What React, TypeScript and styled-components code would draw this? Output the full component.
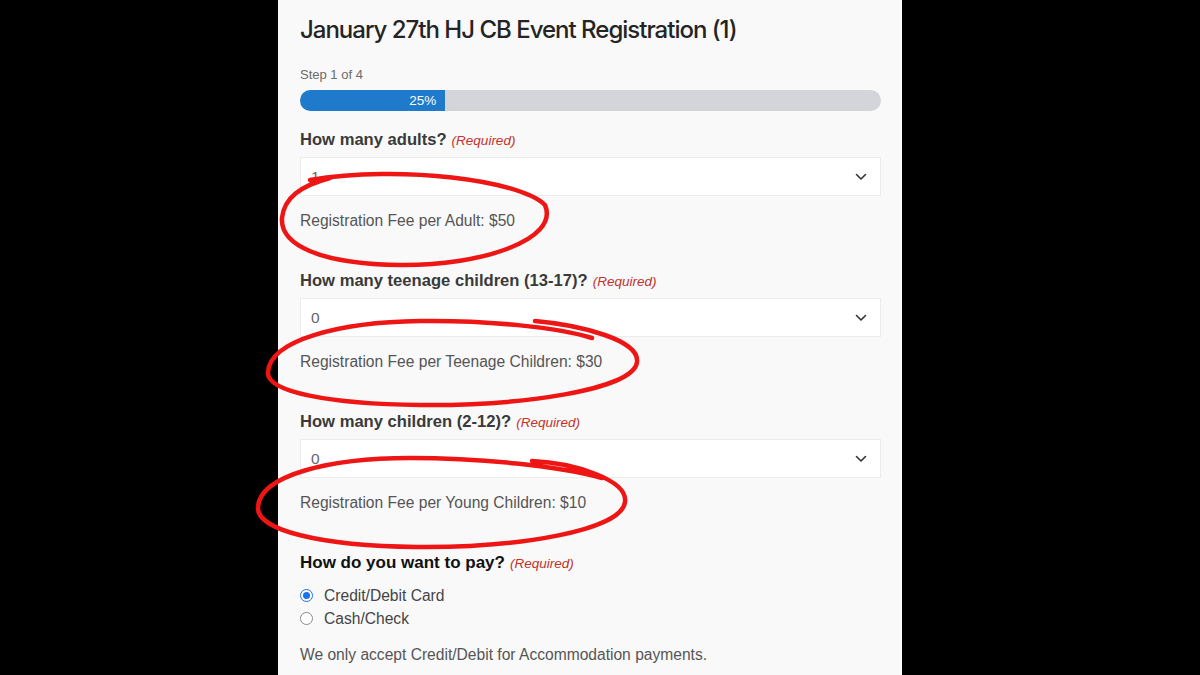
import React from "react";
import styled, { createGlobalStyle } from "styled-components";

const Global = createGlobalStyle`
  html, body { margin: 0; padding: 0; background: #000; }
  body { font-family: "Liberation Sans", Arial, sans-serif; }
`;

const Page = styled.div`
  position: relative;
  width: 1200px;
  height: 675px;
  background: #000;
  display: flex;
  justify-content: flex-start;
  overflow: hidden;
`;

const Panel = styled.div`
  margin-left: 278px;
  width: 581px;
  height: 661px;
  background: #f9f9f9;
  border-right: 2px solid #fdfdfd;
  padding: 14px 19px 0 22px;
  display: flex;
  flex-direction: column;
  box-sizing: content-box;
`;

const Title = styled.h1`
  margin: 0;
  font-family: Inter, "Noto Sans", sans-serif;
  font-weight: 500;
  font-size: 24px;
  line-height: 32px;
  letter-spacing: -1px;
  color: #242424;
`;

const StepText = styled.div`
  margin-top: 21px;
  font-size: 13px;
  line-height: 16px;
  color: #6b6b6b;
`;

const Track = styled.div`
  margin-top: 7px;
  height: 21px;
  border-radius: 11px;
  background: #d3d5da;
  overflow: hidden;
  display: flex;
`;

const Fill = styled.div`
  height: 100%;
  background: #1f7acb;
  color: #fff;
  font-size: 13.5px;
  display: flex;
  align-items: center;
  justify-content: flex-end;
  padding-right: 9px;
  box-sizing: border-box;
`;

const Field = styled.div<{ first?: boolean }>`
  margin-top: ${(p) => (p.first ? "19px" : "40px")};
  display: flex;
  flex-direction: column;
`;

const Label = styled.div<{ dark?: boolean }>`
  font-weight: 700;
  font-size: ${(p) => (p.dark ? "17px" : "16.6px")};
  line-height: 20px;
  color: ${(p) => (p.dark ? "#111" : "#3a3a3a")};
`;

const Required = styled.span`
  margin-left: 5px;
  font-weight: 400;
  font-style: italic;
  font-size: 13.5px;
  color: #c4312b;
`;

const SelectBox = styled.div`
  margin-top: 6px;
  height: 39px;
  background: #fff;
  border: 1px solid #ececec;
  box-sizing: border-box;
  display: flex;
  align-items: center;
  justify-content: space-between;
  padding: 0 13px 0 10px;
  font-size: 15.5px;
  color: #666;
`;

const Fee = styled.div`
  margin-top: 15px;
  font-size: 15.6px;
  line-height: 20px;
  color: #555;
`;

const RadioList = styled.div`
  margin-top: 10px;
  display: flex;
  flex-direction: column;
`;

const RadioRow = styled.label`
  height: 23px;
  display: flex;
  align-items: center;
  gap: 11px;
  font-size: 15.6px;
  color: #444;
`;

const RadioDot = styled.span<{ checked?: boolean }>`
  width: 13px;
  height: 13px;
  border-radius: 50%;
  box-sizing: border-box;
  border: 1px solid ${(p) => (p.checked ? "#1a73e8" : "#8a8a8a")};
  background: #fff;
  display: flex;
  align-items: center;
  justify-content: center;
  &::after {
    content: "";
    width: 7px;
    height: 7px;
    border-radius: 50%;
    background: ${(p) => (p.checked ? "#1a73e8" : "transparent")};
  }
`;

const Note = styled.div`
  margin-top: 15px;
  font-size: 15.6px;
  line-height: 20px;
  color: #555;
`;

const Overlay = styled.svg`
  position: absolute;
  left: 0;
  top: 0;
  pointer-events: none;
`;

const Chevron = () => (
  <svg width="12" height="8" viewBox="0 0 12 8">
    <path d="M1.5 1.5 L6 6 L10.5 1.5" fill="none" stroke="#333" strokeWidth="1.6" strokeLinecap="round" strokeLinejoin="round" />
  </svg>
);

const fields = [
  { q: "How many adults?", v: "1", fee: "Registration Fee per Adult: $50" },
  { q: "How many teenage children (13-17)?", v: "0", fee: "Registration Fee per Teenage Children: $30" },
  { q: "How many children (2-12)?", v: "0", fee: "Registration Fee per Young Children: $10" },
];

export default function App() {
  return (
    <Page>
      <Global />
      <Panel>
        <Title>January 27th HJ CB Event Registration (1)</Title>
        <StepText>Step 1 of 4</StepText>
        <Track>
          <Fill style={{ width: "25%" }}>25%</Fill>
        </Track>
        {fields.map((f, i) => (
          <Field key={f.q} first={i === 0}>
            <Label>
              {f.q}
              <Required>(Required)</Required>
            </Label>
            <SelectBox>
              <span>{f.v}</span>
              <Chevron />
            </SelectBox>
            <Fee>{f.fee}</Fee>
          </Field>
        ))}
        <Field>
          <Label dark>
            How do you want to pay?
            <Required>(Required)</Required>
          </Label>
          <RadioList>
            <RadioRow>
              <RadioDot checked />
              Credit/Debit Card
            </RadioRow>
            <RadioRow>
              <RadioDot />
              Cash/Check
            </RadioRow>
          </RadioList>
          <Note>We only accept Credit/Debit for Accommodation payments.</Note>
        </Field>
      </Panel>
      <Overlay width="1200" height="675" viewBox="0 0 1200 675">
        <g fill="none" stroke="#ee1515" strokeWidth="4.5" strokeLinecap="round" strokeLinejoin="round">
          <path d="M310 180 C400 165 520 180 545 205 C560 240 480 266 400 265 C320 264 280 245 282 218 C284 198 300 186 330 178" />
          <path d="M535 321 C580 325 640 340 637 362 C634 390 520 406 420 405 C330 404 266 392 268 372 C270 340 340 322 420 321 C490 320 560 328 592 338" />
          <path d="M532 461 C575 463 628 480 625 502 C622 530 520 548 417 547 C320 546 256 530 258 507 C260 475 330 458 410 458 C480 458 560 466 602 478" />
        </g>
      </Overlay>
    </Page>
  );
}
